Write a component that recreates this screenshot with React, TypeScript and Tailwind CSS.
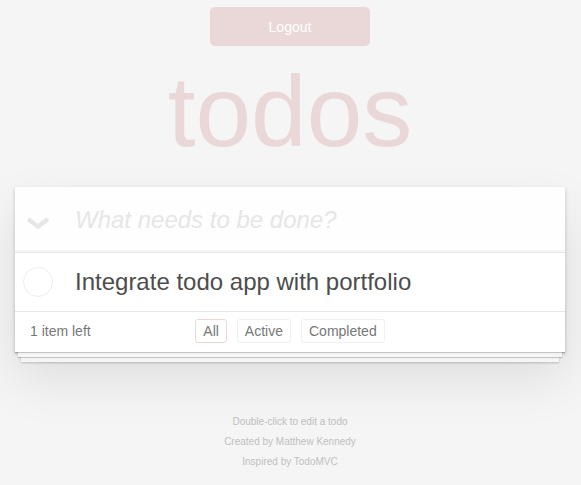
import { useState } from 'react'

export default function App() {
  const [filter, setFilter] = useState('All')
  const filters = ['All', 'Active', 'Completed']

  return (
    <div className="min-h-screen bg-[#f5f5f5] px-[15px] text-[14px] text-[#4d4d4d] font-['Liberation_Sans',Arial,sans-serif]">
      <div className="max-w-[550px] pt-[7px]">

        {/* LOGOUT */}
        <button className="block ml-[195px] w-[160px] h-[39px] rounded-[5px] bg-[#ead7d7] text-white text-[14px] pt-[2px]">
          Logout
        </button>

        {/* TITLE */}
        <h1 className="mt-[9px] text-center text-[100px] leading-[112px] font-thin text-[rgba(175,47,47,0.15)]">
          todos
        </h1>

        {/* APP */}
        <section className="relative mt-[20px] bg-white shadow-[0_2px_4px_0_rgba(0,0,0,0.2),0_25px_50px_0_rgba(0,0,0,0.1)]">

          <header className="relative h-[65px]">
            <svg width="26" height="14" viewBox="0 0 26 14" className="absolute left-[10px] top-[29px]">
              <polyline points="3,3 13,10.5 23,3" fill="none" stroke="#e6e6e6" strokeWidth="4.5" />
            </svg>
            <input
              className="w-full h-[65px] pl-[60px] pr-4 text-[24px] bg-[rgba(0,0,0,0.003)] outline-none shadow-[inset_0_-2px_1px_rgba(0,0,0,0.03)] placeholder:italic placeholder:text-[#e6e6e6]"
              placeholder="What needs to be done?"
            />
          </header>

          <ul className="border-t border-[#e6e6e6]">
            <li className="h-[58px] flex items-center">
              <div className="w-[60px] pl-[8px]">
                <div className="w-[30px] h-[30px] rounded-full border border-[#ededed]" />
              </div>
              <label className="text-[24px] leading-[1.2] text-[#4d4d4d]">
                Integrate todo app with portfolio
              </label>
            </li>
          </ul>

          <footer className="relative h-[41px] px-[15px] pb-[2px] border-t border-[#e6e6e6] text-[#777] flex items-center before:content-[''] before:absolute before:inset-x-0 before:bottom-0 before:h-[50px] before:overflow-hidden before:shadow-[0_1px_1px_rgba(0,0,0,0.2),0_8px_0_-3px_#f6f6f6,0_9px_1px_-3px_rgba(0,0,0,0.2),0_16px_0_-6px_#f6f6f6,0_17px_2px_-6px_rgba(0,0,0,0.2)]">
            <span className="relative">1 item left</span>
            <div className="absolute inset-x-0 top-0 h-[38px] flex items-center justify-center gap-[10px]">
              {filters.map((f) => (
                <button
                  key={f}
                  onClick={() => setFilter(f)}
                  className={`px-[7px] h-[24px] rounded-[3px] border ${
                    filter === f ? 'border-[rgba(175,47,47,0.2)]' : 'border-[#f0f0f0]'
                  }`}
                >
                  {f}
                </button>
              ))}
            </div>
          </footer>
        </section>

        {/* INFO */}
        <div className="mt-[65px] text-center text-[10px] leading-none text-[#bfbfbf] flex flex-col gap-[10px]">
          <p>Double-click to edit a todo</p>
          <p>Created by Matthew Kennedy</p>
          <p>Inspired by TodoMVC</p>
        </div>

      </div>
    </div>
  )
}
